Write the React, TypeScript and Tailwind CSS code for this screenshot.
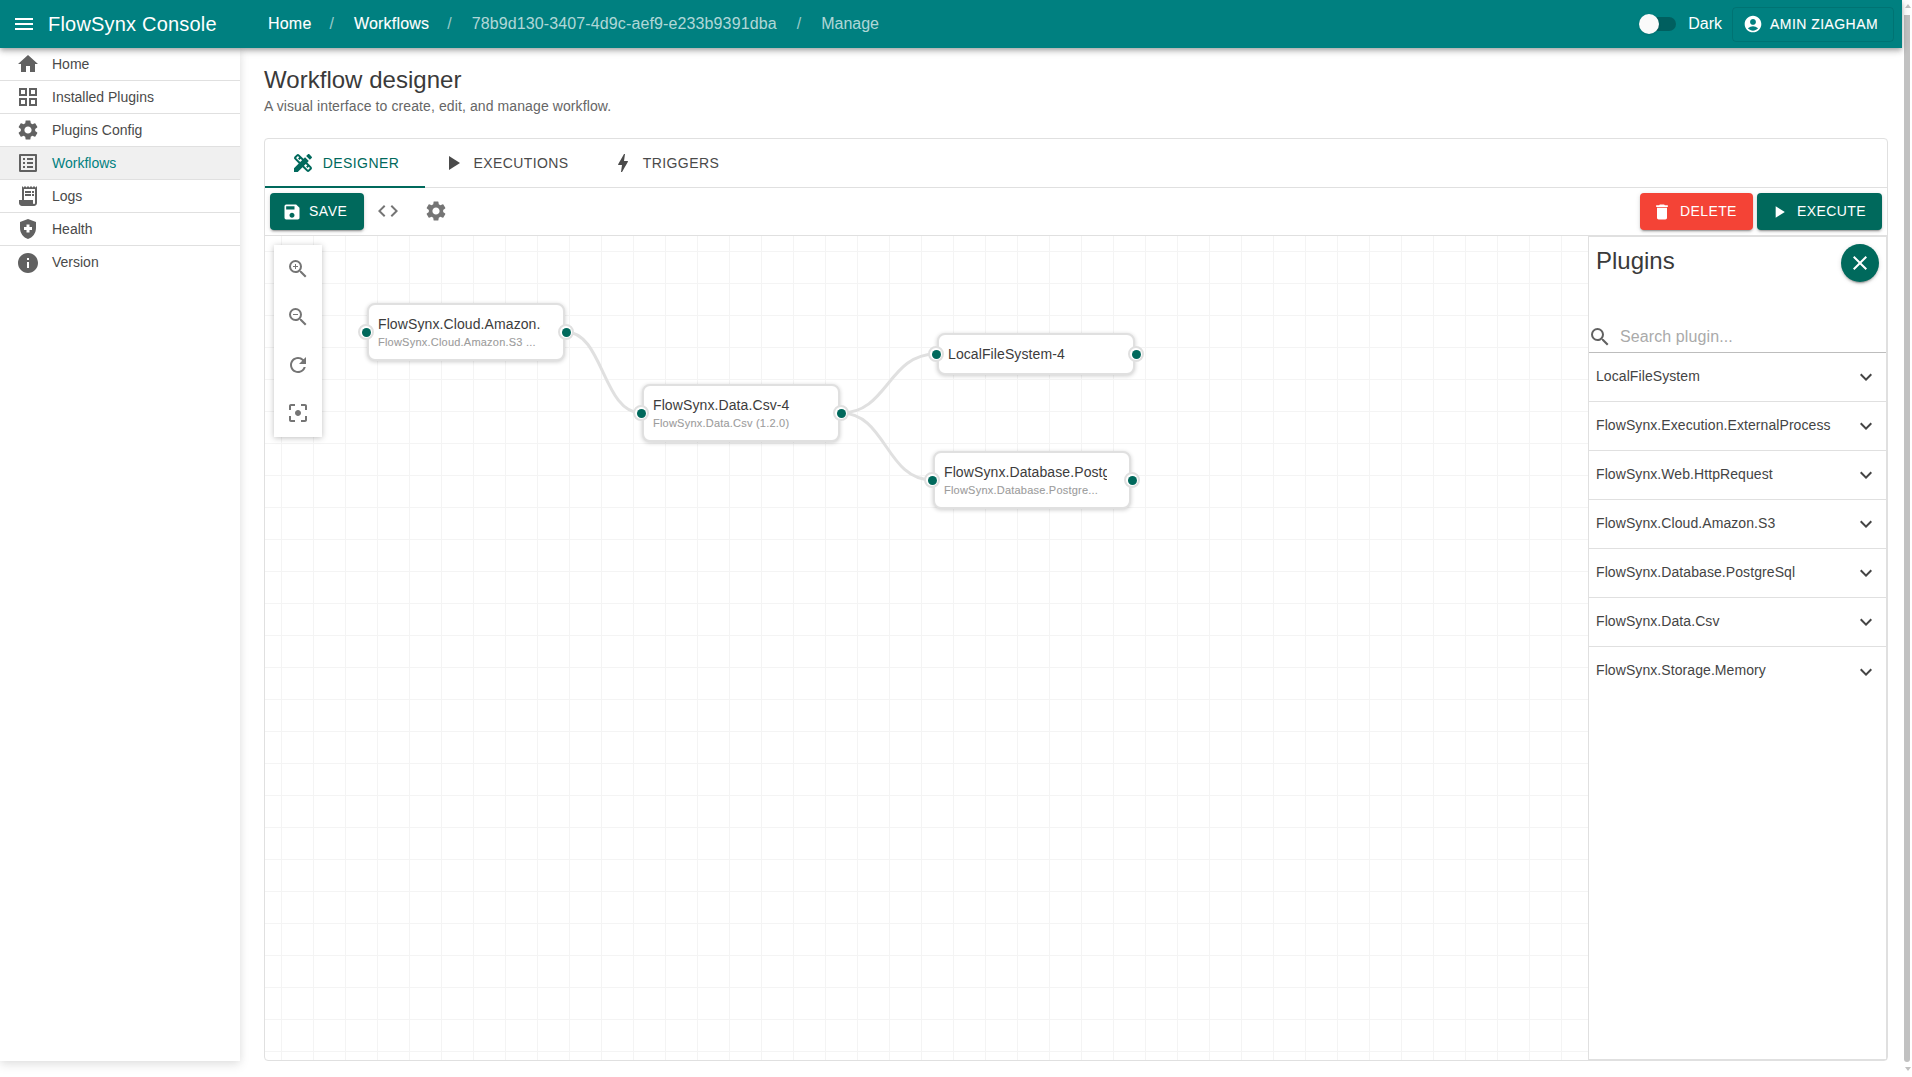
import {
  MdAccountCircle,
  MdBolt,
  MdClose,
  MdCode,
  MdDelete,
  MdDesignServices,
  MdExpandMore,
  MdFilterCenterFocus,
  MdHealthAndSafety,
  MdHome,
  MdInfo,
  MdMenu,
  MdOutlineGridView,
  MdOutlineListAlt,
  MdPlayArrow,
  MdReceiptLong,
  MdRefresh,
  MdSave,
  MdSearch,
  MdSettings,
  MdZoomIn,
  MdZoomOut,
} from "react-icons/md";

const navItems = [
  { label: "Home", icon: MdHome },
  { label: "Installed Plugins", icon: MdOutlineGridView },
  { label: "Plugins Config", icon: MdSettings },
  { label: "Workflows", icon: MdOutlineListAlt, active: true },
  { label: "Logs", icon: MdReceiptLong },
  { label: "Health", icon: MdHealthAndSafety },
  { label: "Version", icon: MdInfo },
];

const plugins = [
  "LocalFileSystem",
  "FlowSynx.Execution.ExternalProcess",
  "FlowSynx.Web.HttpRequest",
  "FlowSynx.Cloud.Amazon.S3",
  "FlowSynx.Database.PostgreSql",
  "FlowSynx.Data.Csv",
  "FlowSynx.Storage.Memory",
];

const tabs = [
  { label: "Designer", icon: MdDesignServices, active: true },
  { label: "Executions", icon: MdPlayArrow },
  { label: "Triggers", icon: MdBolt },
];

const nodes = [
  {
    title: "FlowSynx.Cloud.Amazon.S3-4",
    sub: "FlowSynx.Cloud.Amazon.S3 ...",
    pos: "left-[102px] top-[67px] h-[58px]",
  },
  {
    title: "FlowSynx.Data.Csv-4",
    sub: "FlowSynx.Data.Csv (1.2.0)",
    pos: "left-[377px] top-[148px] h-[58px]",
  },
  {
    title: "LocalFileSystem-4",
    pos: "left-[672px] top-[97px] h-[42px]",
  },
  {
    title: "FlowSynx.Database.PostgreSql-4",
    sub: "FlowSynx.Database.Postgre...",
    pos: "left-[668px] top-[215px] h-[58px]",
  },
];

const Handle = ({ side }: { side: "left" | "right" }) => (
  <span
    className={
      "absolute top-1/2 flex h-4 w-4 -translate-y-1/2 items-center justify-center rounded-full border-2 border-[#e0e0e0] bg-white " +
      (side === "left" ? "left-[-11px]" : "right-[-11px]")
    }
  >
    <span className="h-[9px] w-[9px] rounded-full bg-[#00695c]" />
  </span>
);

const btnShadow =
  "shadow-[0_3px_1px_-2px_rgba(0,0,0,0.2),0_2px_2px_0_rgba(0,0,0,0.14),0_1px_5px_0_rgba(0,0,0,0.12)]";

export default function App() {
  return (
    <div className="flex h-[1077px] w-[1912px] overflow-hidden bg-white font-['Liberation_Sans',Arial,sans-serif] text-[#444]">
      <div className="flex w-[1902px] flex-col">
        <header className="relative z-20 flex h-12 shrink-0 items-center bg-[#008080] text-white shadow-[0_2px_4px_-1px_rgba(0,0,0,0.2),0_4px_5px_0_rgba(0,0,0,0.14),0_1px_10px_0_rgba(0,0,0,0.12)]">
          <MdMenu className="ml-3 shrink-0" size={24} />
          <div className="ml-3 w-[220px] text-[20px] tracking-[0.2px]">FlowSynx Console</div>
          <nav className="flex items-center text-[16px]">
            <span className="tracking-[0.2px] [-webkit-text-stroke:0.1px_white]">Home</span>
            <span className="ml-[18px] mr-[20px] text-white/60">/</span>
            <span className="tracking-[0.2px] [-webkit-text-stroke:0.1px_white]">Workflows</span>
            <span className="ml-[18px] mr-[20px] text-white/60">/</span>
            <span className="tracking-[0.12px] text-white/70">78b9d130-3407-4d9c-aef9-e233b9391dba</span>
            <span className="mx-[20px] text-white/60">/</span>
            <span className="text-white/70">Manage</span>
          </nav>
          <div className="ml-auto flex items-center pr-[8px]">
            <div className="relative mr-3 h-[14px] w-[36px] rounded-full bg-[#005f5f]">
              <span className="absolute left-[-1px] top-[-3px] h-5 w-5 rounded-full bg-[#fafafa] shadow" />
            </div>
            <span className="text-[16px]">Dark</span>
            <button className="ml-[10px] flex h-[35px] w-[162px] items-center rounded border border-black/10 pl-[10px] text-[14px]">
              <MdAccountCircle size={20} />
              <span className="ml-[7px] tracking-[0.45px] [-webkit-text-stroke:0.1px_white]">AMIN ZIAGHAM</span>
            </button>
          </div>
        </header>

        <div className="flex min-h-0 flex-1">
          <aside className="relative z-10 h-[1013px] w-60 shrink-0 bg-white shadow-[0_4px_10px_rgba(0,0,0,0.1),0_0_8px_rgba(0,0,0,0.05)]">
            {navItems.map((item, i) => (
              <div
                key={item.label}
                className={
                  "flex h-[33px] items-center pl-4 text-[14px] " +
                  (i < navItems.length - 1 ? "border-b border-[#e0e0e0] " : "") +
                  (item.active ? "bg-[#f0f0f0] text-[#008080]" : "text-[#4a4a4a]")
                }
              >
                <item.icon className="shrink-0 text-[#616161]" size={24} />
                <span className="ml-3">{item.label}</span>
              </div>
            ))}
          </aside>

          <main className="flex min-w-0 flex-1 flex-col pl-6 pr-[14px] pt-4">
            <h1 className="text-[24px] leading-8 tracking-[0.03px] text-[#3a3a3a]">Workflow designer</h1>
            <p className="text-[14px] leading-5 tracking-[0.1px] text-[#666]">
              A visual interface to create, edit, and manage workflow.
            </p>

            <section className="mt-[22px] flex h-[923px] flex-col rounded border border-[#e0e0e0]">
              <div className="flex h-[49px] shrink-0 border-b border-[#e0e0e0]">
                {tabs.map((tab) => (
                  <div
                    key={tab.label}
                    className={
                      "relative flex w-40 items-center justify-center gap-2 text-[14px] uppercase tracking-[0.4px] " +
                      (tab.active ? "text-[#00695c]" : "text-[#4a4a4a]")
                    }
                  >
                    <tab.icon size={24} />
                    {tab.label}
                    {tab.active && (
                      <span className="absolute bottom-[-1px] left-0 h-[2px] w-full bg-[#00695c]" />
                    )}
                  </div>
                ))}
              </div>

              <div className="flex h-[48px] shrink-0 items-center border-b border-[#e0e0e0] pl-[5px] pr-[5px]">
                <button className={"flex h-[37px] w-[94px] items-center rounded bg-[#00695c] pl-3 text-[14px] uppercase tracking-[0.5px] text-white " + btnShadow}>
                  <MdSave size={20} />
                  <span className="ml-[7px]">Save</span>
                </button>
                <div className="ml-[4px] -mt-px flex h-10 w-10 items-center justify-center text-[#757575]">
                  <MdCode size={24} />
                </div>
                <div className="ml-[8px] -mt-px flex h-10 w-10 items-center justify-center text-[#757575]">
                  <MdSettings size={24} />
                </div>
                <button className={"ml-auto flex h-[37px] w-[113px] items-center rounded bg-[#f44336] pl-3 text-[14px] uppercase tracking-[0.4px] text-white " + btnShadow}>
                  <MdDelete size={20} />
                  <span className="ml-2">Delete</span>
                </button>
                <button className={"ml-1 flex h-[37px] w-[125px] items-center rounded bg-[#00695c] pl-3 text-[14px] uppercase tracking-[0.4px] text-white " + btnShadow}>
                  <MdPlayArrow size={20} />
                  <span className="ml-2">Execute</span>
                </button>
              </div>

              <div className="flex min-h-0 flex-1">
                <div className="relative min-w-0 flex-1 bg-[linear-gradient(#f4f4f4_1px,transparent_1px),linear-gradient(90deg,#f4f4f4_1px,transparent_1px)] bg-[size:32px_32px] bg-[position:16px_15px]">
                  <svg className="absolute left-0 top-0 h-full w-full" fill="none" stroke="#e0e0e0" strokeWidth="3">
                    <path d="M301 96C338 96 338 177 376 177" />
                    <path d="M576 177C623 177 623 118 671 118" />
                    <path d="M576 177C621 177 621 244 667 244" />
                  </svg>

                  <div className="absolute left-[9px] top-[9px] flex w-12 flex-col bg-white text-[#757575] shadow-[0_1px_6px_rgba(0,0,0,0.25)]">
                    <div className="flex h-12 items-center justify-center"><MdZoomIn size={24} /></div>
                    <div className="flex h-12 items-center justify-center"><MdZoomOut size={24} /></div>
                    <div className="flex h-12 items-center justify-center"><MdRefresh size={24} /></div>
                    <div className="flex h-12 items-center justify-center"><MdFilterCenterFocus size={24} /></div>
                  </div>

                  {nodes.map((node) => (
                    <div
                      key={node.title}
                      className={
                        "absolute flex w-[198px] flex-col justify-center rounded-lg border-2 border-[#e0e0e0] bg-white pl-[9px] shadow-[0_1px_4px_rgba(0,0,0,0.2)] " +
                        node.pos
                      }
                    >
                      <Handle side="left" />
                      <div className="w-[163px] overflow-hidden whitespace-nowrap text-[14px] leading-[18px] tracking-[0.1px] text-[#3c3c3c]">
                        {node.title}
                      </div>
                      {node.sub && (
                        <div className="mt-[2px] whitespace-nowrap text-[11px] leading-[15px] tracking-[0.22px] text-[#9c9c9c] [-webkit-text-stroke:0.1px_#9c9c9c]">{node.sub}</div>
                      )}
                      <Handle side="right" />
                    </div>
                  ))}
                </div>

                <aside className="flex w-[299px] shrink-0 flex-col border border-[#e0e0e0] bg-white">
                  <div className="relative h-[116px] shrink-0">
                    <div className="absolute left-[7px] top-[8px] text-[24px] leading-8 text-[#3a3a3a]">Plugins</div>
                    <button className={"absolute right-[7px] top-[7px] flex h-[38px] w-[38px] items-center justify-center rounded-full bg-[#00695c] text-white " + btnShadow}>
                      <MdClose size={24} />
                    </button>
                    <div className="absolute bottom-0 left-0 right-0 flex h-8 items-center border-b border-[#bdbdbd]">
                      <MdSearch className="-ml-px text-[#616161]" size={24} />
                      <span className="ml-[8px] text-[16px] tracking-[0.1px] text-[#aaa]">Search plugin...</span>
                    </div>
                  </div>
                  {plugins.map((plugin, i) => (
                    <div
                      key={plugin}
                      className={
                        "flex h-[49px] shrink-0 items-center justify-between pl-[7px] pr-2 text-[14px] tracking-[0.08px] text-[#444] " +
                        (i < plugins.length - 1 ? "border-b border-[#e0e0e0]" : "")
                      }
                    >
                      <span className="pb-[2px]">{plugin}</span>
                      <MdExpandMore size={24} />
                    </div>
                  ))}
                </aside>
              </div>
            </section>
          </main>
        </div>
      </div>

      <div className="flex w-[10px] flex-col items-start pl-[2px]">
        <div className="ml-[0.5px] mt-[4px] h-0 w-0 border-x-[3px] border-b-[4px] border-x-transparent border-b-[#c1c1c1]" />
        <div className="mt-[7px] h-[1047px] w-[6px] rounded-b bg-[#c1c1c1]" />
        <div className="ml-[0.5px] mt-[5px] h-0 w-0 border-x-[3px] border-t-[4px] border-x-transparent border-t-[#c1c1c1]" />
      </div>
    </div>
  );
}
